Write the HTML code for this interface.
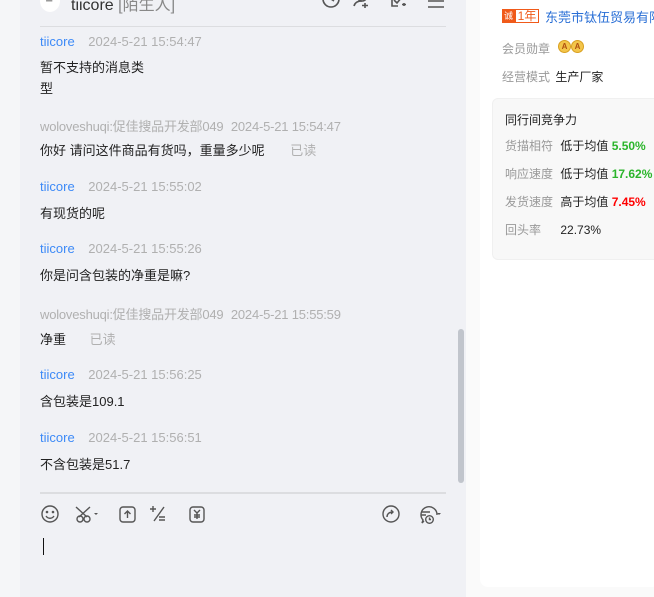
<!DOCTYPE html>
<html><head><meta charset="utf-8"><style>
*{margin:0;padding:0;box-sizing:border-box}
html,body{width:654px;height:597px;overflow:hidden}
body{position:relative;font-family:"Liberation Sans","Noto Sans CJK SC",sans-serif;background:#f5f6f8}
.chat{position:absolute;left:20px;top:0;width:446px;height:597px;background:#f0f1f5}
.abs{position:absolute;white-space:nowrap}
.n{font-size:13px;color:#3d8af7}
.g{font-size:13px;color:#b0b0b0}
.t{font-size:13px;color:#222}
.right{position:absolute;left:466px;top:0;width:188px;height:597px;background:#fafafa;overflow:hidden}
.card{position:absolute;left:14px;top:-10px;width:180px;height:597px;background:#fff;border-radius:8px}
.inner{position:absolute;left:26px;top:98px;width:170px;height:162px;background:#f8f8f8;border-radius:6px;border:1px solid #f0f0f0}
.lbl{font-size:12px;color:#999}
.v{font-size:12px;color:#222}
svg{position:absolute}
</style></head><body>
<div class="chat"></div>
<div class="abs" style="left:40px;top:-10px;width:20px;height:22px;border-radius:50%;background:#fff"></div>
<div class="abs" style="left:45px;top:-5px;font-size:10px;color:#333">≗</div>
<div class="abs" style="left:71px;top:-9px;font-size:16px;color:#333">tiicore <span style="color:#888">[陌生人]</span></div>
<svg style="left:320px;top:-6px" width="140" height="18" fill="none" stroke="#555" stroke-width="1.6">
<circle cx="11" cy="5" r="8"/><path d="M11 0v5l3 2"/>
<circle cx="42" cy="2" r="5"/><path d="M34 12c1-4 4-5 8-5M45 9v5M42 11.5h6"/>
<path d="M78 0h-6v12h6M74 6l3 3 5-6M84 12v-3M82 10.5h4"/><path d="M89 2l3 0-1.5 2z" fill="#555"/>
<path d="M108 1h16M108 7h16M108 13h16"/>
</svg>
<div class="abs" style="left:40px;top:26px;width:406px;height:1px;background:#dcdde0"></div>

<div class="abs n" style="left:40px;top:34px">tiicore <span class="g" style="margin-left:10px">2024-5-21 15:54:47</span></div>
<div class="abs t" style="left:40px;top:57px;line-height:21px">暂不支持的消息类<br>型</div>

<div class="abs g" style="left:40px;top:116px;letter-spacing:-0.2px">woloveshuqi:促佳搜品开发部049 <span style="margin-left:4px">2024-5-21 15:54:47</span></div>
<div class="abs t" style="left:40px;top:140px">你好 请问这件商品有货吗，重量多少呢 <span class="g" style="margin-left:22px">已读</span></div>

<div class="abs n" style="left:40px;top:179px">tiicore <span class="g" style="margin-left:10px">2024-5-21 15:55:02</span></div>
<div class="abs t" style="left:40px;top:203px">有现货的呢</div>

<div class="abs n" style="left:40px;top:241px">tiicore <span class="g" style="margin-left:10px">2024-5-21 15:55:26</span></div>
<div class="abs t" style="left:40px;top:265px">你是问含包装的净重是嘛?</div>

<div class="abs g" style="left:40px;top:304px;letter-spacing:-0.2px">woloveshuqi:促佳搜品开发部049 <span style="margin-left:4px">2024-5-21 15:55:59</span></div>
<div class="abs t" style="left:40px;top:329px">净重 <span class="g" style="margin-left:20px">已读</span></div>

<div class="abs n" style="left:40px;top:367px">tiicore <span class="g" style="margin-left:10px">2024-5-21 15:56:25</span></div>
<div class="abs t" style="left:40px;top:391px">含包装是109.1</div>

<div class="abs n" style="left:40px;top:430px">tiicore <span class="g" style="margin-left:10px">2024-5-21 15:56:51</span></div>
<div class="abs t" style="left:40px;top:454px">不含包装是51.7</div>

<div class="abs" style="left:458px;top:329px;width:6px;height:154px;border-radius:3px;background:#c1c5cc"></div>
<div class="abs" style="left:40px;top:492px;width:406px;height:2px;background:#dcdde0"></div>
<svg style="left:40px;top:504px" width="410" height="22" fill="none" stroke="#555" stroke-width="1.4">
<circle cx="10" cy="10" r="8"/><circle cx="7" cy="8" r=".6" fill="#555"/><circle cx="13" cy="8" r=".6" fill="#555"/><path d="M6 12c2 3 6 3 8 0"/>
<circle cx="40" cy="15" r="3"/><circle cx="47" cy="15" r="3"/><path d="M36 3l11 10M50 3l-11 10"/><path d="M54 9h4l-2 2z" fill="#555" stroke="none"/>
<rect x="80" y="3" width="15" height="15" rx="3"/><path d="M87.5 14V7M84.5 10l3-3 3 3"/>
<path d="M113 2v6M110 5h6M124 3l-10 14M119 13h6M119 16h6"/>
<rect x="150" y="3" width="14" height="15" rx="3"/><path d="M154 6l3 3 3-3M157 9v6M154 11h6M154 13h6"/>
<circle cx="351" cy="10" r="8"/><path d="M347 13c0-3 2-5 6-5M351 6l2 2-2 2"/>
<path d="M384 17l-2 2 1-3a8 8 0 1 1 14-5"/><path d="M381 8h9M381 11h5"/><circle cx="389.5" cy="15.5" r="3.8"/><path d="M389.5 13.5v2h1.5"/><path d="M397 9h4l-2 2z" fill="#555" stroke="none"/>
</svg>
<div class="abs" style="left:43px;top:538px;width:1px;height:17px;background:#111"></div>

<div class="right">
<div class="card"></div>
<div class="abs" style="left:36px;top:9px;width:13px;height:14px;background:#f05a1a;color:#fff;font-size:9px;text-align:center;line-height:14px">诚</div>
<div class="abs" style="left:49px;top:9px;width:24px;height:14px;border:1px solid #f05a1a;color:#f05a1a;font-size:12px;line-height:12px;text-align:center">1年</div>
<div class="abs" style="left:79px;top:7px;font-size:13px;color:#2a6fd6">东莞市钛伍贸易有限公司</div>
<div class="abs lbl" style="left:36px;top:40px">会员勋章</div>
<div class="abs" style="left:92px;top:40px;width:13px;height:13px;border-radius:50%;background:#f3c54a;border:1px solid #d9a020;font-size:8px;color:#b05010;text-align:center;line-height:11px;font-weight:bold">A</div>
<div class="abs" style="left:105px;top:40px;width:13px;height:13px;border-radius:50%;background:#f3c54a;border:1px solid #d9a020;font-size:8px;color:#b05010;text-align:center;line-height:11px;font-weight:bold">A</div>
<div class="abs lbl" style="left:36px;top:68px">经营模式 <span class="v" style="margin-left:2px">生产厂家</span></div>
<div class="inner"></div>
<div class="abs v" style="left:39px;top:111px">同行间竞争力</div>
<div class="abs lbl" style="left:39px;top:137px">货描相符 <span class="v" style="margin-left:4px">低于均值 <b style="color:#2bb52b">5.50%</b></span></div>
<div class="abs lbl" style="left:39px;top:165px">响应速度 <span class="v" style="margin-left:4px">低于均值 <b style="color:#2bb52b">17.62%</b></span></div>
<div class="abs lbl" style="left:39px;top:193px">发货速度 <span class="v" style="margin-left:4px">高于均值 <b style="color:#f00">7.45%</b></span></div>
<div class="abs lbl" style="left:39px;top:221px">回头率 <span class="v" style="margin-left:16px">22.73%</span></div>
</div>
</body></html>
